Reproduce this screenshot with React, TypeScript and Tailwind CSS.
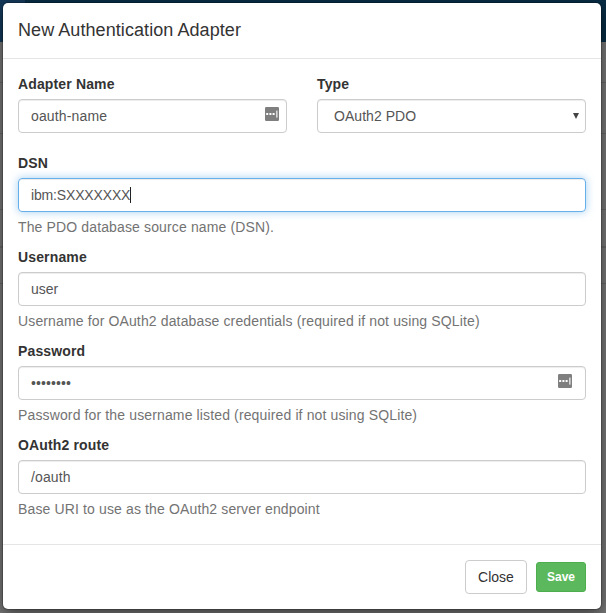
import type { ReactNode } from 'react';

const control =
  'flex h-[34px] items-center rounded-[4px] border px-3 text-[14px] text-[#555]';
const plain =
  'border-[#ccc] shadow-[inset_0_1px_1px_rgba(0,0,0,0.075)]';
const focused =
  'border-[#66afe9] shadow-[inset_0_1px_1px_rgba(0,0,0,0.075),0_0_8px_rgba(102,175,233,0.6)]';

function FillIcon() {
  return (
    <svg width="14" height="14" viewBox="0 0 14 14" className="shrink-0">
      <rect width="14" height="14" rx="1.2" fill="#7f7f7f" />
      <rect x="1.2" y="6" width="2" height="2" fill="#fff" />
      <rect x="4.4" y="6" width="2" height="2" fill="#fff" />
      <rect x="7.6" y="6" width="2" height="2" fill="#fff" />
      <rect x="11.2" y="3.6" width="1.3" height="7" fill="#eee" />
    </svg>
  );
}

function Field({ label, help, children }: { label: string; help?: string; children: ReactNode }) {
  return (
    <div className="flex flex-1 flex-col">
      <div className="mb-[5px] h-5 font-bold tracking-[0.14px] text-[#333]">{label}</div>
      {children}
      {help && <p className="mt-[5px] h-5 tracking-[0.135px] text-[#737373]">{help}</p>}
    </div>
  );
}

function Backdrop() {
  return (
    <div className="absolute inset-0 flex flex-col bg-[#777]">
      <div className="flex h-[42px] shrink-0 bg-[#082c43]">
        <div className="h-full w-[25px] bg-[#14395a]" />
      </div>
      <div className="h-[41px] border-b border-[#666]" />
      <div className="h-[51px] border-b border-[#666]" />
      <div className="h-[76px] border-b border-[#666]" />
      <div className="h-[38px] border-b-2 border-[#686868]" />
      <div className="h-9 border-b border-[#666]" />
    </div>
  );
}

export default function App() {
  return (
    <div className="relative h-[613px] w-[606px] overflow-hidden font-['Liberation_Sans',Arial,sans-serif] text-[14px] leading-5">
      <Backdrop />
      <div className="relative mt-[3px] ml-[3px] flex h-[606px] w-[598px] flex-col rounded-[5px] bg-white shadow-[0_0_0_1px_rgba(0,0,0,0.2),0_5px_15px_rgba(0,0,0,0.5)]">
        <header className="flex h-14 items-center border-b border-[#e5e5e5] px-[15px] pb-0.5">
          <h4 className="text-[18px] tracking-[0.07px] text-[#333]">New Authentication Adapter</h4>
        </header>
        <main className="flex flex-1 flex-col px-[15px] pt-[15px]">
          <div className="mb-5 flex gap-[30px]">
            <Field label="Adapter Name">
              <div className={`${control} ${plain} justify-between pr-[7px]`}>
                <span className="tracking-[0.14px]">oauth-name</span>
                <span className="-mt-1"><FillIcon /></span>
              </div>
            </Field>
            <Field label="Type">
              <div className={`${control} ${plain} justify-between pr-[6px] pl-4`}>
                <span className="tracking-[0.05px]">OAuth2 PDO</span>
                <svg width="6" height="6" viewBox="0 0 6 6"><path d="M0 0H6L3 6Z" fill="#444" /></svg>
              </div>
            </Field>
          </div>
          <div className="flex flex-col gap-[10px]">
            <Field label="DSN" help="The PDO database source name (DSN).">
              <div className={`${control} ${focused}`}>
                <span className="tracking-[-0.16px]">ibm:SXXXXXXX</span>
                <span className="h-4 w-px bg-[#222]" />
              </div>
            </Field>
            <Field label="Username" help="Username for OAuth2 database credentials (required if not using SQLite)">
              <div className={`${control} ${plain}`}>user</div>
            </Field>
            <Field label="Password" help="Password for the username listed (required if not using SQLite)">
              <div className={`${control} ${plain} justify-between pr-[13px]`}>
                <span className="tracking-[0.1px]">••••••••</span>
                <span className="-mt-1"><FillIcon /></span>
              </div>
            </Field>
            <Field label="OAuth2 route" help="Base URI to use as the OAuth2 server endpoint">
              <div className={`${control} ${plain} tracking-[0.1px]`}>/oauth</div>
            </Field>
          </div>
        </main>
        <footer className="flex h-[65px] items-center justify-end gap-[9px] border-t border-[#e5e5e5] px-[15px]">
          <button className="h-[34px] w-[62px] rounded-[4px] border border-[#ccc] bg-white text-[#333]">Close</button>
          <button className="h-[30px] w-[50px] rounded-[3px] border border-[#4cae4c] bg-[#5cb85c] text-[12px] font-bold text-white">Save</button>
        </footer>
      </div>
    </div>
  );
}
